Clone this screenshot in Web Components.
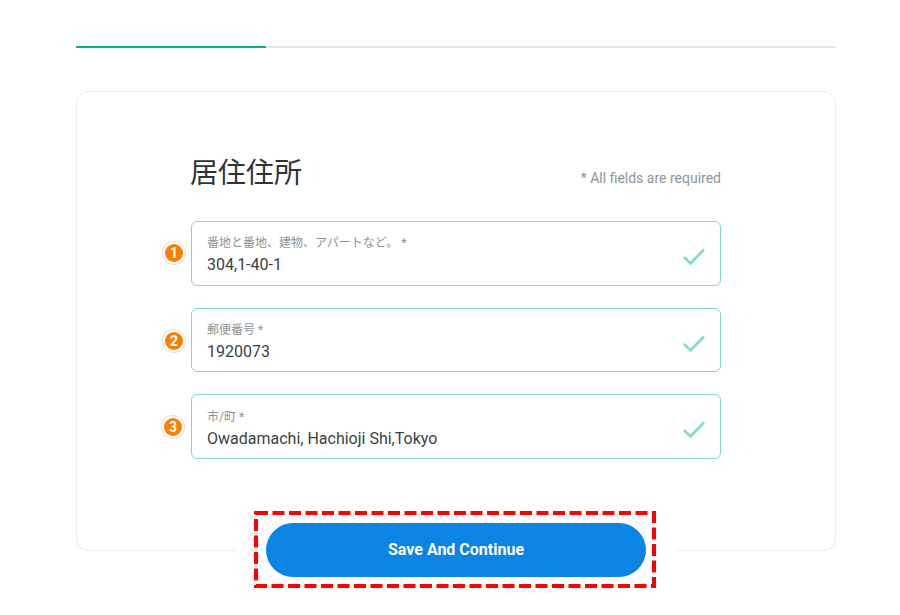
<!DOCTYPE html>
<html lang="ja">
<head>
<meta charset="utf-8">
<title>居住住所</title>
<style>
  html, body { margin: 0; background: #fff; }
  body { font-family: Roboto, "Noto Sans CJK JP", sans-serif; min-height: 615px; }
</style>
</head>
<body>
<address-page></address-page>

<template id="progress-tpl">
  <style>
    :host { display: block; height: 2px; background: #e1e6e6; }
    div { height: 2px; width: 190px; background: #00b48e; }
  </style>
  <div></div>
</template>

<template id="field-tpl">
  <style>
    :host { display: block; position: relative; box-sizing: border-box; height: var(--h, 65px);
      border: 1px solid #7fdcc3; border-radius: 6px; background: #fff; padding: var(--pt, 13px) 15px 0; }
    .label { font: 12px/16px Roboto, "Noto Sans CJK JP", sans-serif; color: #8f9494; }
    .value { font: 16px/22px Roboto, "Noto Sans CJK JP", sans-serif; color: #3a3f45; margin-top: 3px; }
    .badge { position: absolute; left: var(--bx, -27px); top: var(--by, 23px); width: 18px; height: 18px;
      border-radius: 50%; background: #fb8000; box-shadow: 0 0 0 2px #fff, 0 0 0 3px #dfdfdf;
      color: #fff; font: 700 14px/18px Roboto, sans-serif; text-align: center; }
    svg { position: absolute; right: 14px; top: 24px; }
  </style>
  <span class="badge"></span>
  <div class="label"><slot name="label"></slot></div>
  <div class="value"><slot></slot></div>
  <svg width="24" height="20" viewBox="0 0 24 20" fill="none">
    <path d="M2 11l6.5 6.5L22 3.5" stroke="#7fdcc3" stroke-width="2.6"/>
  </svg>
</template>

<template id="save-tpl">
  <style>
    :host { display: block; position: absolute; left: 159px; top: 419px; background: #fff; padding: 0 21px 0 18px; }
    .dash { position: relative; box-sizing: border-box; width: 402px; height: 77px;
      display: flex; align-items: center; justify-content: center; padding: 1px 0 0 2px; }
    .dash svg { position: absolute; left: 0; top: 0; }
    button { width: 380px; height: 54px; border: 0; border-radius: 27px; background: #0b84e3;
      color: #fff; font: 700 16px Roboto, sans-serif; padding: 0 0 2px; }
  </style>
  <div class="dash">
    <svg width="402" height="77" fill="none">
      <rect x="2" y="2" width="398" height="73" stroke="#f00" stroke-width="4" stroke-dasharray="12 4.5"/>
    </svg>
    <button><slot></slot></button>
  </div>
</template>

<template id="page-tpl">
  <style>
    :host { display: block; width: 760px; margin-left: 76px; padding-top: 46px; }
    .card { position: relative; box-sizing: border-box; height: 460px; margin-top: 43px;
      border: 1px solid #ebeeee; border-radius: 12px; padding: 0 114px; }
    header { display: flex; justify-content: space-between; align-items: flex-end;
      height: 96px; margin-left: -1px; }
    h1 { margin: 0; font: 400 28px/36px Roboto, "Noto Sans CJK JP", sans-serif; color: #2e3338; position: relative; top: 4px; }
    .req { font: 14px/20px Roboto, sans-serif; color: #8d9499; }
    .fields { display: flex; flex-direction: column; gap: 22px; margin-top: 33px; }
  </style>
  <progress-line></progress-line>
  <section class="card">
    <header><h1>居住住所</h1><span class="req">* All fields are required</span></header>
    <div class="fields">
      <address-field num="1" style="--by:22px"><span slot="label">番地と番地、建物、アパートなど。 *</span>304,1-40-1</address-field>
      <address-field num="2" style="--h:64px"><span slot="label">郵便番号 *</span>1920073</address-field>
      <address-field num="3" style="--bx:-28px;--pt:14px"><span slot="label">市/町 *</span>Owadamachi, Hachioji Shi,Tokyo</address-field>
    </div>
    <save-button>Save And Continue</save-button>
  </section>
</template>

<script>
  // clones a template into an open shadow root
  class Base extends HTMLElement {
    constructor (id) {
      super();
      this.attachShadow({ mode: 'open' }).append(document.getElementById(id).content.cloneNode(true));
    }
  }
  class ProgressLine extends Base { constructor () { super('progress-tpl'); } }
  class AddressField extends Base {
    constructor () { super('field-tpl'); }
    connectedCallback () {
      this.shadowRoot.querySelector('.badge').textContent = this.getAttribute('num');
    }
  }
  class SaveButton extends Base { constructor () { super('save-tpl'); } }
  class AddressPage extends Base { constructor () { super('page-tpl'); } }

  customElements.define('progress-line', ProgressLine);
  customElements.define('address-field', AddressField);
  customElements.define('save-button', SaveButton);
  customElements.define('address-page', AddressPage);
</script>
</body>
</html>
